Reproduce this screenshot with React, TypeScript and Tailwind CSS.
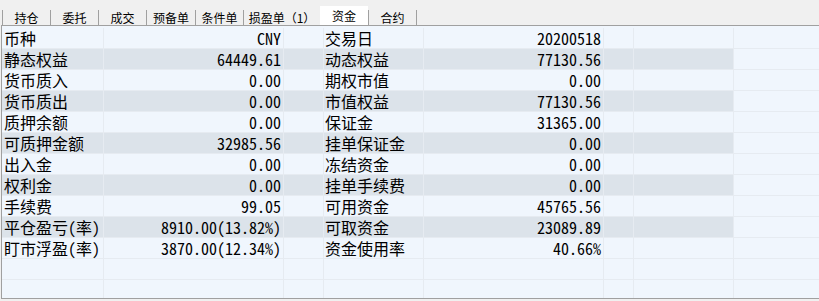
import React from 'react';

const tabs = [
  { name: '持仓', w: 'w-[48px]' },
  { name: '委托', w: 'w-[48px]' },
  { name: '成交', w: 'w-[48px]' },
  { name: '预备单', w: 'w-[49px]' },
  { name: '条件单', w: 'w-[48px]' },
  { name: '损盈单（1）', w: 'w-[77px]' },
  { name: '资金', w: 'w-[48px]', active: true },
  { name: '合约', w: 'w-[48px]' },
];

const rows: [string, string, string, string][] = [
  ['币种', 'CNY', '交易日', '20200518'],
  ['静态权益', '64449.61', '动态权益', '77130.56'],
  ['货币质入', '0.00', '期权市值', '0.00'],
  ['货币质出', '0.00', '市值权益', '77130.56'],
  ['质押余额', '0.00', '保证金', '31365.00'],
  ['可质押金额', '32985.56', '挂单保证金', '0.00'],
  ['出入金', '0.00', '冻结资金', '0.00'],
  ['权利金', '0.00', '挂单手续费', '0.00'],
  ['手续费', '99.05', '可用资金', '45765.56'],
  ['平仓盈亏(率)', '8910.00(13.82%)', '可取资金', '23089.89'],
  ['盯市浮盈(率)', '3870.00(12.34%)', '资金使用率', '40.66%'],
  ['', '', '', ''],
  ['', '', '', ''],
];

const cell = 'h-full border-r border-[#e6ebf1] shrink-0 whitespace-nowrap';

export default function App() {
  return (
    <div className="w-[819px] h-[301px] bg-[#f0f0f0] overflow-hidden text-black">
      <div className="h-[25px] flex items-end pl-[2px] font-['Noto_Sans_CJK_SC',sans-serif] text-[12px]">
        {tabs.map((t) =>
          t.active ? (
            <div key={t.name} className={`${t.w} h-[19px] bg-white flex items-end justify-center pb-[1px] leading-[16px]`}>
              {t.name}
            </div>
          ) : (
            <div
              key={t.name}
              className={`${t.w} h-[15px] border-l border-[#a0a0a0] flex items-center justify-center leading-[15px]`}
            >
              {t.name}
            </div>
          )
        )}
        <div className="h-[15px] border-l border-[#a0a0a0]" />
      </div>
      <div className="ml-[1px] h-[274px] border-l border-t border-b border-[#a0a0a0] bg-[#f0f6fd] pt-[2px] overflow-hidden font-['Noto_Sans_Mono_CJK_SC','Noto_Sans_CJK_SC',monospace] text-[16px] leading-[20px]">
        {rows.map((r, i) => {
          const grey = i % 2 === 1 && r[0] !== '';
          const bg = grey ? 'bg-[#dce3ea]' : '';
          return (
            <div key={i} className="h-[21px] flex border-b border-[#e6ebf1]">
              <div className={`${cell} ${bg} w-[102px] pl-[2px]`}>{r[0]}</div>
              <div className={`${cell} ${bg} w-[180px] text-right pr-[2px]`}>{r[1]}</div>
              <div className={`${cell} ${bg} w-[40px]`} />
              <div className={`${cell} ${bg} w-[100px] pl-[1px]`}>{r[2]}</div>
              <div className={`${cell} ${bg} w-[180px] text-right pr-[2px]`}>{r[3]}</div>
              <div className={`${cell} ${bg} w-[30px]`} />
              <div className={`${cell} ${bg} w-[100px]`} />
              <div className={`${cell} w-[100px]`} />
            </div>
          );
        })}
      </div>
    </div>
  );
}
